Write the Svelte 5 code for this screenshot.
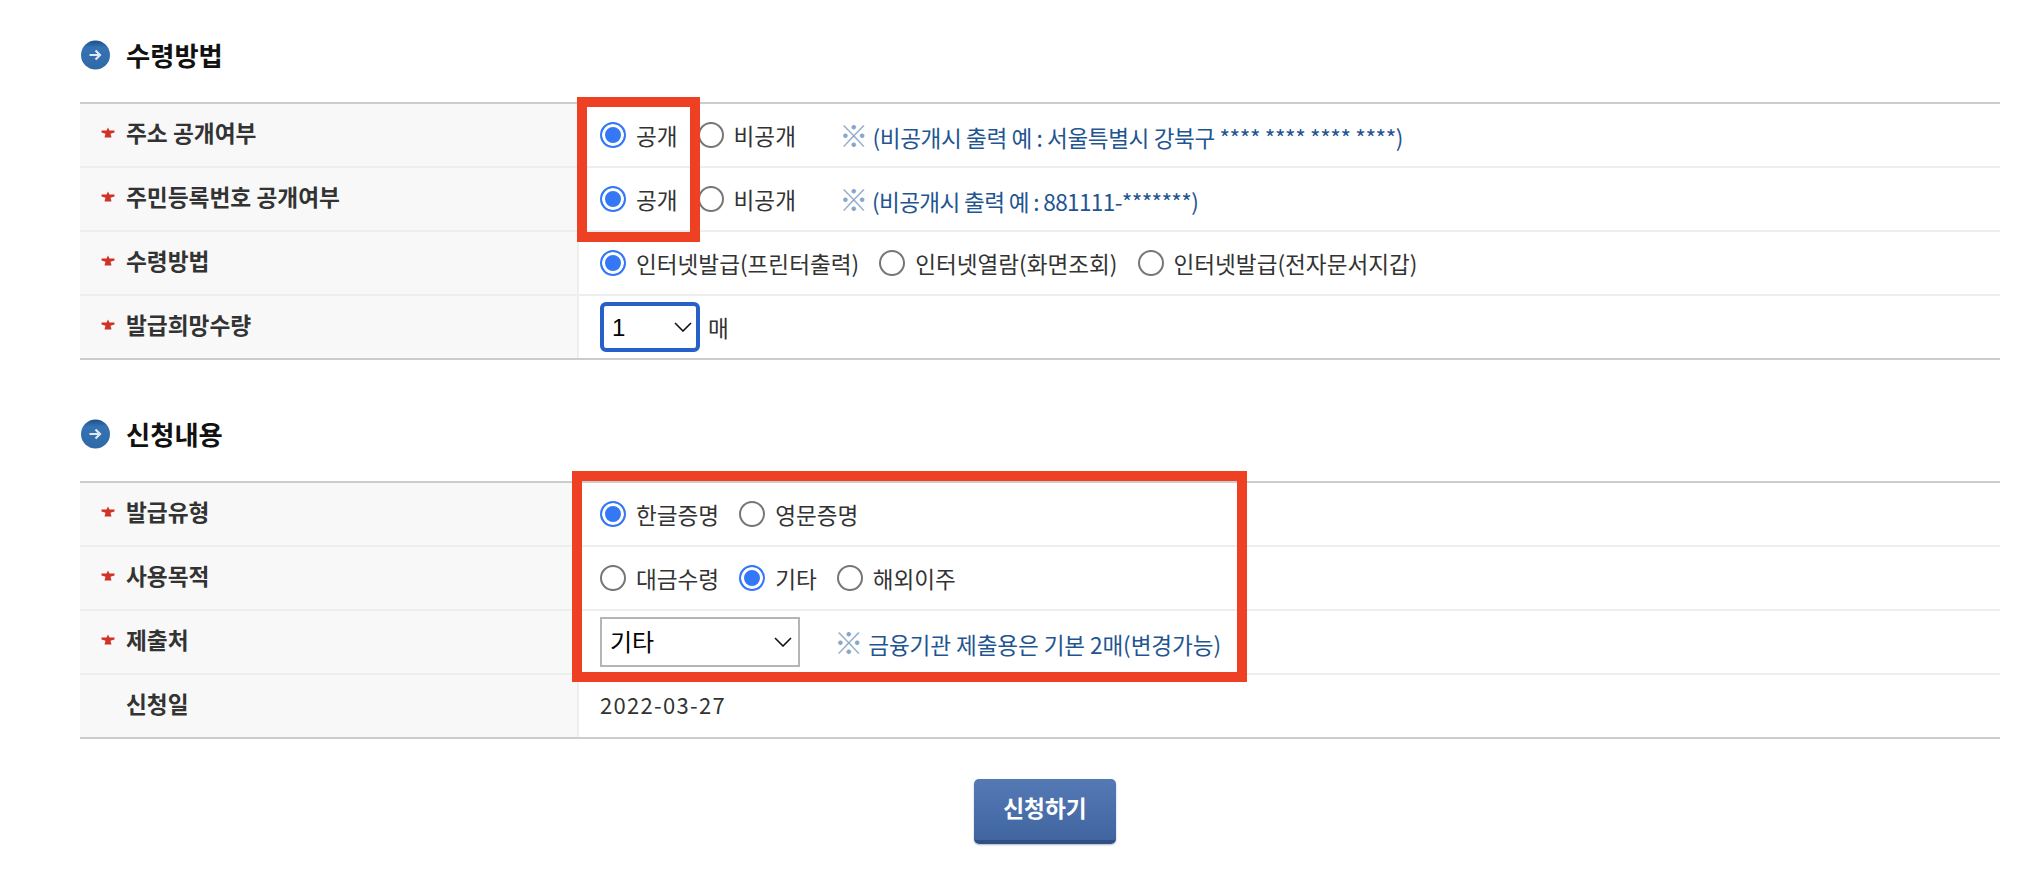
<script>
	const receive = [
		{ label: '주소 공개여부', req: true, radios: ['공개', '비공개'], checked: 0, hint: '(비공개시 출력 예 : 서울특별시 강북구 **** **** **** ****)' },
		{ label: '주민등록번호 공개여부', req: true, radios: ['공개', '비공개'], checked: 0, hint: '(비공개시 출력 예 : 881111-*******)', tight: true },
		{ label: '수령방법', req: true, radios: ['인터넷발급(프린터출력)', '인터넷열람(화면조회)', '인터넷발급(전자문서지갑)'], checked: 0 }
	];
	const request = [
		{ label: '발급유형', req: true, radios: ['한글증명', '영문증명'], checked: 0 },
		{ label: '사용목적', req: true, radios: ['대금수령', '기타', '해외이주'], checked: 1 }
	];
</script>

{#snippet icon()}
	<svg class="title-icon" viewBox="0 0 30 30" aria-hidden="true">
		<defs>
			<linearGradient id="ball" x1="0" y1="0" x2="0" y2="1">
				<stop offset="0" stop-color="#1d4f86" />
				<stop offset="0.25" stop-color="#3673b4" />
				<stop offset="1" stop-color="#2f68a5" />
			</linearGradient>
		</defs>
		<circle cx="15" cy="15" r="14.5" fill="url(#ball)" />
		<path d="M9 15h10M15 10.500l4.500 4.500-4.500 4.500" fill="none" stroke="#dfe9f4" stroke-width="2.200" />
	</svg>
{/snippet}

{#snippet star()}
	<svg class="star" viewBox="0 0 14 11" aria-hidden="true">
		<path d="M7 .5 8.500 3.500H13.500V5.500L9.500 6.800 10.500 10.500H3.500L4.500 6.800 .5 5.500V3.500H5.500z" fill="#cf3327" />
	</svg>
{/snippet}

{#snippet radioRow(row, name)}
	<div class="row">
		<div class="th">{#if row.req}{@render star()}{/if}<span>{row.label}</span></div>
		<div class="td">
			{#each row.radios as r, i}
				<label class="radio">
					<input type="radio" {name} checked={i === row.checked} />
					<span>{r}</span>
				</label>
			{/each}
			{#if row.hint}
				<span class="hint hint-wide" class:tight={row.tight}><i>※</i> {row.hint}</span>
			{/if}
		</div>
	</div>
{/snippet}

<div class="page">
	<h2>{@render icon()}<span>수령방법</span></h2>
	<div class="table">
		{#each receive as row, i}
			{@render radioRow(row, 'r' + i)}
		{/each}
		<div class="row">
			<div class="th">{@render star()}<span>발급희망수량</span></div>
			<div class="td">
				<div class="select-wrap qty">
					<select>
						<option>1</option>
						<option>2</option>
					</select>
					<svg viewBox="0 0 18 10" aria-hidden="true"><path d="M1 1 9 9l8-8" fill="none" stroke="#111" stroke-width="1.600" /></svg>
				</div>
				<span class="unit">매</span>
			</div>
		</div>
		<div class="mark mark-a"></div>
	</div>

	<h2 class="second">{@render icon()}<span>신청내용</span></h2>
	<div class="table">
		{#each request as row, i}
			{@render radioRow(row, 'q' + i)}
		{/each}
		<div class="row">
			<div class="th">{@render star()}<span>제출처</span></div>
			<div class="td">
				<div class="select-wrap place">
					<select>
						<option>기타</option>
					</select>
					<svg viewBox="0 0 18 10" aria-hidden="true"><path d="M1 1 9 9l8-8" fill="none" stroke="#111" stroke-width="1.600" /></svg>
				</div>
				<span class="hint hint-place"><i>※</i> 금융기관 제출용은 기본 2매(변경가능)</span>
			</div>
		</div>
		<div class="row">
			<div class="th"><span>신청일</span></div>
			<div class="td"><span class="date">2022-03-27</span></div>
		</div>
		<div class="mark mark-b"></div>
	</div>

	<div class="actions">
		<button type="button">신청하기</button>
	</div>
</div>

<style>
	:global(body) {
		margin: 0;
		background: #fff;
	}

	.page {
		width: 1920px;
		padding: 0 42px 0 80px;
		font-family: 'Noto Sans CJK KR', 'Noto Sans', sans-serif;
		font-size: 22.600px;
		color: #333;
	}

	h2 {
		display: flex;
		align-items: center;
		gap: 15px;
		height: 30px;
		margin: 0;
		padding: 40px 0 32px;
		font-size: 26.300px;
		font-weight: 700;
		line-height: 30px;
		color: #111;
	}

	h2.second {
		padding: 59px 0 32px;
	}

	.title-icon {
		width: 31px;
		height: 30px;
		flex: none;
	}

	.table {
		position: relative;
		border-top: 2px solid #ccc;
	}

	.row {
		display: grid;
		grid-template-columns: 499px 1fr;
		height: 64px;
		box-sizing: border-box;
		border-bottom: 2px solid #eee;
	}

	.table .row:nth-last-child(2) {
		border-bottom-color: #ccc;
	}

	.th {
		display: flex;
		align-items: center;
		position: relative;
		box-sizing: border-box;
		padding: 0 0 6px 46px;
		background: #f8f8f8;
		border-right: 2px solid #eee;
		font-weight: 700;
		font-size: 22.700px;
		white-space: nowrap;
	}

	.star {
		position: absolute;
		left: 21px;
		top: 23px;
		width: 14px;
		height: 11px;
	}

	.td {
		display: flex;
		align-items: center;
		padding-left: 21px;
		white-space: nowrap;
	}

	.radio {
		display: flex;
		align-items: center;
		gap: 10px;
		margin-right: 20px;
	}

	input[type='radio'] {
		appearance: none;
		width: 26px;
		height: 26px;
		margin: 0;
		box-sizing: border-box;
		border: 2px solid #767676;
		border-radius: 50%;
		background: #fff;
	}

	input[type='radio']:checked {
		border-color: #3478f6;
		background: #3478f6;
		box-shadow: inset 0 0 0 3px #fff;
	}

	.hint {
		position: relative;
		top: 2px;
		color: #1f5591;
	}

	.hint i {
		font-style: normal;
		font-size: 1.300em;
		line-height: 1;
		color: #8aa6c6;
	}

	.hint-wide {
		margin-left: 23px;
		letter-spacing: -0.400px;
	}

	.hint-wide.tight {
		letter-spacing: -0.650px;
	}

	.hint-place {
		margin-left: 34px;
		letter-spacing: -0.100px;
	}

	.select-wrap {
		position: relative;
	}

	.select-wrap svg {
		position: absolute;
		top: 20px;
		right: 8px;
		width: 18px;
		height: 10px;
		pointer-events: none;
	}

	select {
		appearance: none;
		display: block;
		box-sizing: border-box;
		width: 100%;
		height: 50px;
		padding: 0 0 0 8px;
		background: #fff;
		font-family: 'Liberation Sans', 'Noto Sans CJK KR', sans-serif;
		font-size: 24px;
		color: #000;
	}

	.qty {
		width: 100px;
	}

	.qty select {
		border: 4px solid #2760c8;
		border-radius: 6px;
	}

	.place {
		width: 200px;
	}

	.place select {
		border: 2px solid #b5b5b5;
		border-radius: 0;
	}

	.unit {
		margin-left: 8px;
	}

	.date {
		position: relative;
		top: -2px;
		font-size: 22px;
		letter-spacing: 1.300px;
	}

	.mark {
		position: absolute;
		box-sizing: border-box;
		border: 10px solid #ee4023;
		pointer-events: none;
	}

	.mark-a {
		top: -7px;
		left: 497px;
		width: 123px;
		height: 145px;
	}

	.mark-b {
		top: -12px;
		left: 492px;
		width: 675px;
		height: 211px;
	}

	.actions {
		display: flex;
		justify-content: center;
		margin-top: 40px;
		padding-bottom: 29px;
	}

	button {
		width: 142px;
		height: 65px;
		box-sizing: border-box;
		margin-left: 10px;
		padding: 0 0 4px;
		border: 0;
		border-bottom: 4px solid #2f4f85;
		border-radius: 5px;
		background: linear-gradient(#5479b5, #41659f);
		box-shadow: 0 1px 2px rgba(47, 79, 133, 0.4);
		font: 700 22.700px 'Noto Sans CJK KR', sans-serif;
		color: #fff;
	}
</style>
